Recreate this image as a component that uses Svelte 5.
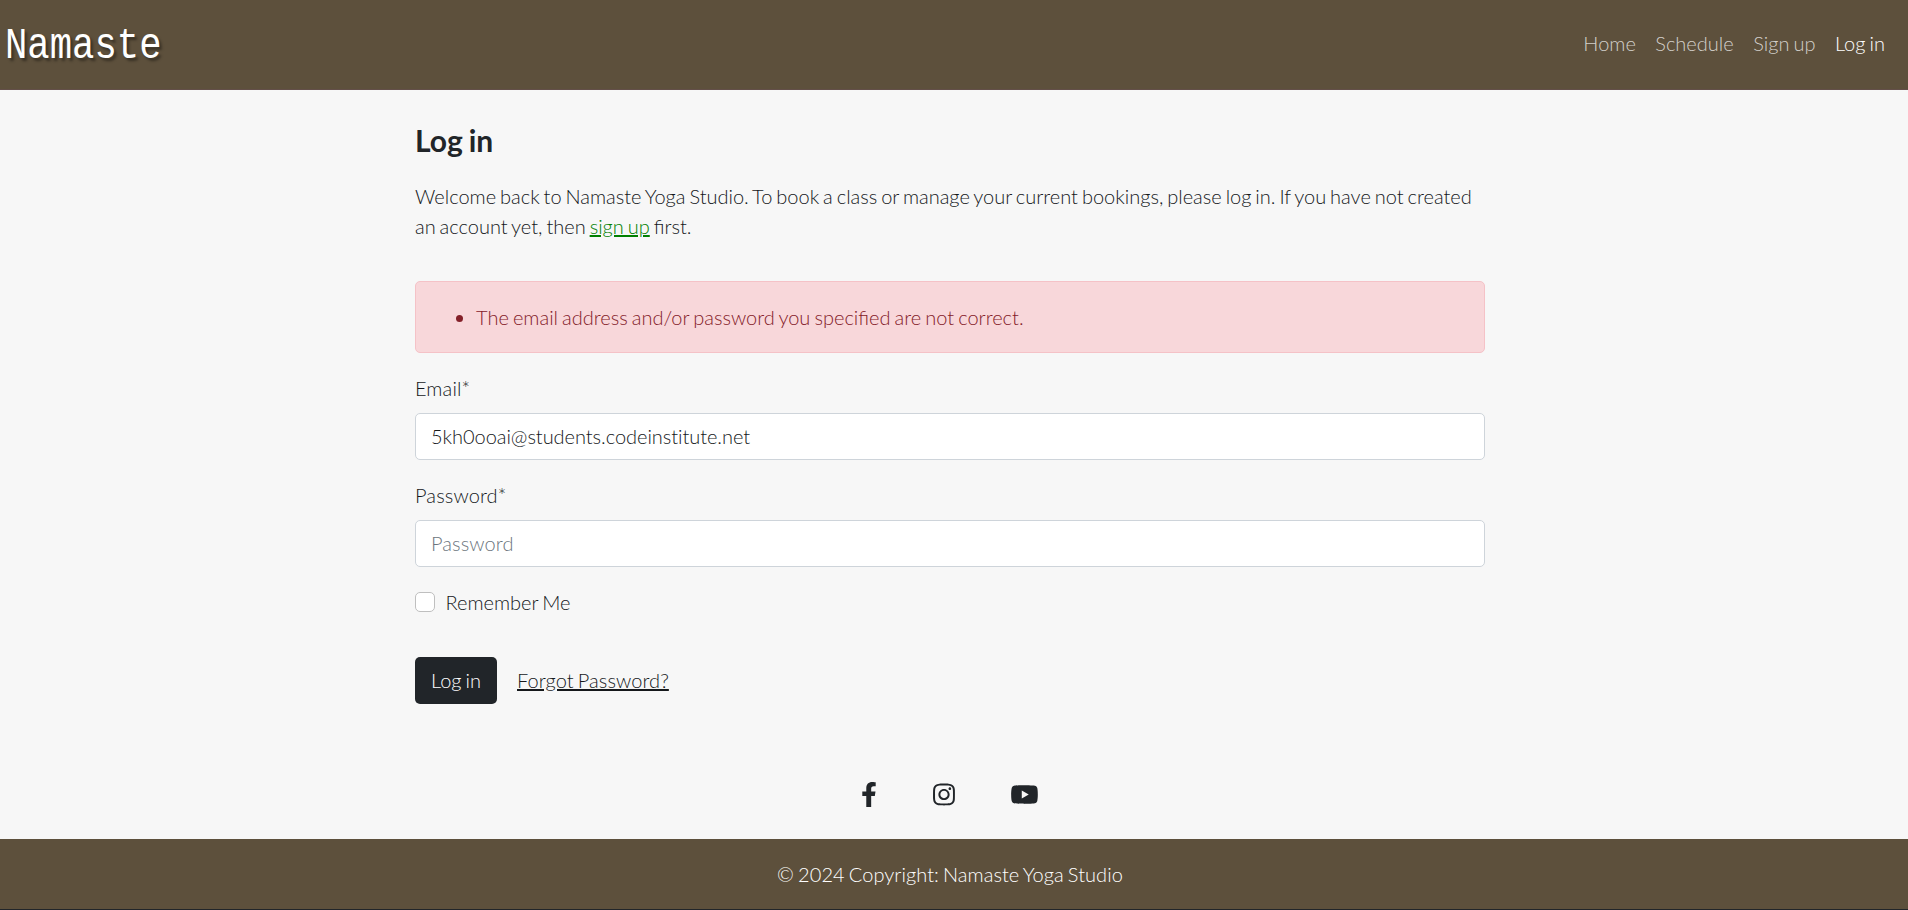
<script>
  const links = ['Home', 'Schedule', 'Sign up', 'Log in'];
</script>

<div class="page">
  <header>
    <a class="brand" href="#home"><span>Namaste</span></a>
    <nav>
      {#each links as link}
        <a href="#nav" class:active={link === 'Log in'}>{link}</a>
      {/each}
    </nav>
  </header>

  <main>
    <h1>Log in</h1>
    <p>
      Welcome back to Namaste Yoga Studio. To book a class or manage your current bookings, please log in. If you have not created an account yet, then <a href="#signup">sign up</a> first.
    </p>
    <form>
      <div class="alert"><ul><li>The email address and/or password you specified are not correct.</li></ul></div>
      <label class="title" for="email">Email*</label>
      <input id="email" class="field" type="text" value="5kh0ooai@students.codeinstitute.net" />
      <label class="title" for="password">Password*</label>
      <input id="password" class="field" type="password" placeholder="Password" />
      <div class="check">
        <input id="remember" type="checkbox" />
        <label for="remember">Remember Me</label>
      </div>
      <div class="actions">
        <button type="button">Log in</button>
        <a href="#forgot">Forgot Password?</a>
      </div>
    </form>
  </main>

  <div class="social">
    <svg class="fb" viewBox="0 0 320 512"><path d="M279.14 288l14.22-92.66h-88.91v-60.13c0-25.35 12.42-50.06 52.24-50.06h40.42V6.26S260.43 0 225.36 0c-73.22 0-121.08 44.38-121.08 124.72v70.62H22.89V288h81.39v224h100.17V288z" /></svg>
    <svg class="ig" viewBox="0 0 448 512"><path d="M224.1 141c-63.6 0-114.9 51.3-114.9 114.9s51.3 114.9 114.9 114.9S339 319.5 339 255.900 287.700 141 224.100 141zm0 189.600c-41.100 0-74.700-33.500-74.700-74.700s33.500-74.700 74.700-74.700 74.700 33.500 74.700 74.700-33.600 74.700-74.700 74.700zm146.400-194.300c0 14.900-12 26.800-26.800 26.800-14.900 0-26.800-12-26.800-26.800s12-26.800 26.800-26.800 26.800 12 26.800 26.800zm76.100 27.200c-1.700-35.900-9.900-67.700-36.200-93.900-26.200-26.200-58-34.400-93.900-36.200-37-2.100-147.900-2.100-184.900 0-35.800 1.700-67.600 9.900-93.900 36.100s-34.400 58-36.200 93.900c-2.100 37-2.100 147.900 0 184.900 1.700 35.900 9.900 67.700 36.200 93.900s58 34.400 93.900 36.200c37 2.100 147.900 2.100 184.900 0 35.900-1.700 67.700-9.900 93.900-36.200 26.200-26.200 34.400-58 36.200-93.900 2.100-37 2.100-147.800 0-184.800zM398.800 388c-7.800 19.600-22.900 34.700-42.600 42.600-29.500 11.700-99.500 9-132.100 9s-102.700 2.600-132.100-9c-19.600-7.800-34.700-22.900-42.600-42.600-11.700-29.500-9-99.500-9-132.100s-2.600-102.700 9-132.100c7.800-19.600 22.900-34.700 42.600-42.600 29.500-11.700 99.500-9 132.100-9s102.700-2.600 132.100 9c19.600 7.800 34.700 22.900 42.600 42.600 11.700 29.500 9 99.500 9 132.100s2.700 102.700-9 132.100z" /></svg>
    <svg class="yt" viewBox="14 0 548 512"><path d="M549.655 124.083c-6.281-23.650-24.787-42.276-48.284-48.597C458.781 64 288 64 288 64S117.220 64 74.629 75.486c-23.497 6.322-42.003 24.947-48.284 48.597-11.412 42.867-11.412 132.305-11.412 132.305s0 89.438 11.412 132.305c6.281 23.650 24.787 41.500 48.284 47.821C117.220 448 288 448 288 448s170.780 0 213.371-11.486c23.497-6.321 42.003-24.171 48.284-47.821 11.412-42.867 11.412-132.305 11.412-132.305s0-89.438-11.412-132.305zm-317.510 213.508V175.185l142.739 81.205-142.739 81.201z" /></svg>
  </div>

  <footer>© 2024 Copyright: Namaste Yoga Studio</footer>
</div>

<style>
  :global(body) {
    margin: 0;
    background: #212529;
  }
  * {
    box-sizing: border-box;
  }
  .page {
    height: 910px;
    overflow: hidden;
    display: flex;
    flex-direction: column;
    background: #f7f7f7;
    border-bottom: 1px solid #212529;
    font: 300 20px/30px Lato, sans-serif;
    word-spacing: -1.35px;
    color: #15181b;
  }
  header {
    flex: none;
    height: 90px;
    display: flex;
    justify-content: space-between;
    align-items: center;
    padding: 0 23px 4px 5px;
    background: #5d503c;
    border-bottom: 1px solid #634f49;
  }
  .brand {
    display: block;
    width: 160px;
    padding-top: 8px;
    color: #fff;
    text-decoration: none;
    font: 400 45px/60px 'Liberation Mono', monospace;
    text-shadow: 3px 3px 3px rgba(0, 0, 0, 0.4);
  }
  .brand span {
    display: inline-block;
    transform: scaleX(0.828);
    transform-origin: left;
  }
  nav {
    display: flex;
    gap: 19.5px;
  }
  nav a {
    color: #d2cfca;
    text-decoration: none;
  }
  nav a.active {
    color: #fff;
  }
  main {
    width: 1070px;
    margin: 0 auto;
    position: relative;
    left: -4px;
    padding-top: 29px;
  }
  h1 {
    margin: 0 0 20px;
    font-size: 30px;
    line-height: 42px;
    font-weight: 700;
    color: #212529;
  }
  p {
    margin: 0 0 40px;
    word-spacing: -1.5px;
  }
  p a {
    color: #008000;
  }
  .alert {
    height: 72px;
    padding: 20px;
    margin-bottom: 20px;
    background: #f8d7da;
    border: 1px solid #f5c2c7;
    border-radius: 5px;
    color: #842029;
  }
  ul {
    margin: 0;
    padding-left: 40px;
  }
  .title {
    display: block;
    margin-bottom: 10px;
    letter-spacing: 0.12px;
  }
  .field {
    display: block;
    width: 100%;
    height: 47px;
    margin-bottom: 20px;
    padding: 6px 15px 8px;
    font: inherit;
    font-variant-ligatures: none;
    letter-spacing: -0.04px;
    color: inherit;
    background: #fff;
    border: 1px solid #ced4da;
    border-radius: 5px;
  }
  .field::placeholder {
    color: #6c757d;
    opacity: 1;
    letter-spacing: 0.1px;
  }
  .check {
    display: flex;
    gap: 10.5px;
    align-items: center;
    margin-bottom: 40px;
  }
  .check input {
    appearance: none;
    width: 20px;
    height: 20px;
    margin: 0;
    background: #fff;
    border: 1px solid #bfbfbf;
    border-radius: 5px;
  }
  .actions {
    display: flex;
    align-items: center;
    gap: 20px;
  }
  button {
    height: 47px;
    padding: 0 16px 2px;
    font: inherit;
    word-spacing: inherit;
    color: #fff;
    background: #212529;
    border: 0;
    border-radius: 5px;
  }
  .actions a {
    color: #15181b;
    padding-bottom: 2px;
    letter-spacing: 0.07px;
  }
  .social {
    display: flex;
    align-items: center;
    height: 50px;
    margin: 65px 0 20px 861px;
  }
  .social svg {
    height: 25px;
    fill: #212529;
  }
  .fb {
    width: 16px;
    margin-right: 56px;
  }
  .ig {
    width: 22px;
    margin-right: 56px;
  }
  .yt {
    width: 27px;
  }
  footer {
    flex: none;
    height: 70px;
    padding: 20px 8px 20px 0;
    text-align: center;
    background: #5d503c;
    color: #fff;
    letter-spacing: 0.05px;
  }
</style>
